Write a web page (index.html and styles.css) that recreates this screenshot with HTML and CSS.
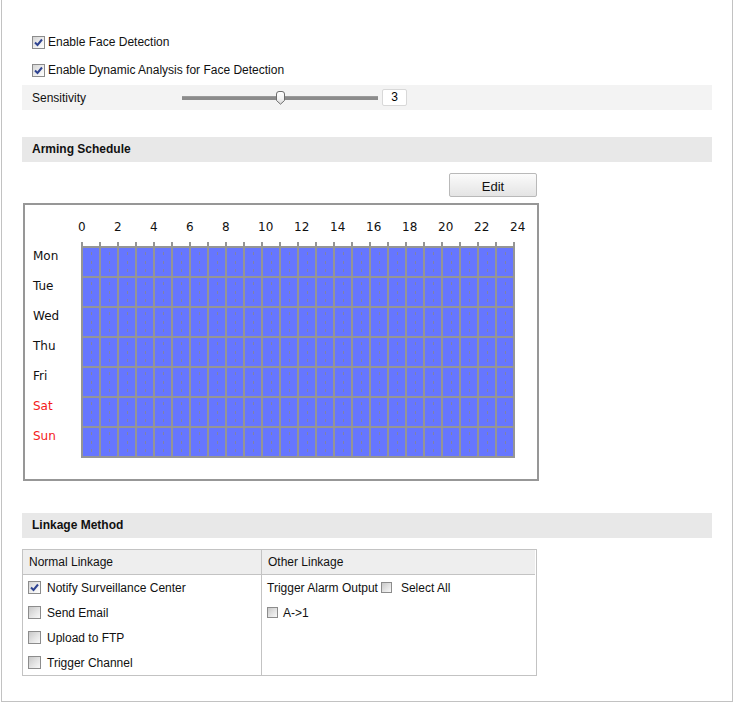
FILE: index.html
```html
<!DOCTYPE html>
<html>
<head>
<meta charset="utf-8">
<link rel="stylesheet" href="styles.css">
</head>
<body>
<div class="frame">
  <div class="content">
    <div class="opt-row">
      <span class="cb checked"><svg width="11" height="11" viewBox="0 0 11 11"><path d="M2 5.5 L4.5 8 L9 2.5" fill="none" stroke="#2e4391" stroke-width="2"/></svg></span>
      <span class="opt-text">Enable Face Detection</span>
    </div>
    <div class="opt-row">
      <span class="cb checked"><svg width="11" height="11" viewBox="0 0 11 11"><path d="M2 5.5 L4.5 8 L9 2.5" fill="none" stroke="#2e4391" stroke-width="2"/></svg></span>
      <span class="opt-text">Enable Dynamic Analysis for Face Detection</span>
    </div>
    <div class="sens-row">
      <span class="sens-label">Sensitivity</span>
      <div class="slider">
        <div class="track"></div>
        <svg class="thumb" width="11" height="14" viewBox="0 0 11 14">
          <defs>
            <linearGradient id="tg" x1="0" y1="0" x2="0" y2="1">
              <stop offset="0" stop-color="#ffffff"/>
              <stop offset="0.55" stop-color="#f4f4f4"/>
              <stop offset="1" stop-color="#d6d6d6"/>
            </linearGradient>
          </defs>
          <path d="M1.5 3 Q1.5 0.5 4 0.5 H7 Q9.5 0.5 9.5 3 V9.5 L5.5 13.2 L1.5 9.5 Z" fill="url(#tg)" stroke="#6e6e6e" stroke-width="1"/>
        </svg>
      </div>
      <div class="sens-value">3</div>
    </div>

    <div class="section-head">Arming Schedule</div>
    <div class="sched-wrap">
      <div class="btn-row"><div class="btn">Edit</div></div>
      <div class="sched">
        <div class="hours">
          <span>0</span><span>2</span><span>4</span><span>6</span><span>8</span><span>10</span><span>12</span><span>14</span><span>16</span><span>18</span><span>20</span><span>22</span><span class="last">24</span>
        </div>
        <div class="sched-body">
          <div class="days">
            <div>Mon</div><div>Tue</div><div>Wed</div><div>Thu</div><div>Fri</div><div class="weekend">Sat</div><div class="weekend">Sun</div>
          </div>
          <svg class="grid" width="434" height="216" viewBox="0 0 434 216">
            <defs>
              <pattern id="tick" x="0" y="0" width="18" height="4" patternUnits="userSpaceOnUse">
                <rect x="0" y="0" width="2" height="4" fill="#959595"/>
              </pattern>
              <pattern id="cell" x="0" y="4" width="18" height="30" patternUnits="userSpaceOnUse">
                <rect x="0" y="0" width="18" height="30" fill="#6676ff"/>
                <rect x="10" y="6" width="1" height="3" fill="#7f82a8"/>
                <rect x="10" y="15" width="1" height="3" fill="#7f82a8"/>
                <rect x="10" y="23" width="1" height="3" fill="#7f82a8"/>
                <rect x="0" y="0" width="2" height="30" fill="#959595"/>
                <rect x="0" y="0" width="18" height="2" fill="#959595"/>
              </pattern>
            </defs>
            <rect x="0" y="0" width="434" height="4" fill="url(#tick)"/>
            <rect x="0" y="4" width="434" height="212" fill="url(#cell)"/>
          </svg>
        </div>
      </div>
    </div>

    <div class="section-head link-head">Linkage Method</div>
    <div class="link">
      <div class="link-th">Normal Linkage</div>
      <div class="link-th right">Other Linkage</div>
      <div class="link-col">
        <div class="link-row">
          <span class="cb checked"><svg width="11" height="11" viewBox="0 0 11 11"><path d="M2 5.5 L4.5 8 L9 2.5" fill="none" stroke="#2e4391" stroke-width="2"/></svg></span>
          <span class="opt-text">Notify Surveillance Center</span>
        </div>
        <div class="link-row"><span class="cb"></span><span class="opt-text">Send Email</span></div>
        <div class="link-row"><span class="cb"></span><span class="opt-text">Upload to FTP</span></div>
        <div class="link-row"><span class="cb"></span><span class="opt-text">Trigger Channel</span></div>
      </div>
      <div class="link-col right">
        <div class="link-row other">
          <span>Trigger Alarm Output</span><span class="cb small sel"></span><span class="sel-text">Select All</span>
        </div>
        <div class="link-row other">
          <span class="cb small"></span><span class="a1">A-&gt;1</span>
        </div>
      </div>
    </div>
  </div>
</div>
</body>
</html>
```

FILE: styles.css
```css
html, body {
  margin: 0;
  padding: 0;
  background: #ffffff;
}
body {
  font-family: "Liberation Sans", Arial, sans-serif;
  font-size: 12px;
  color: #111;
}
.frame {
  box-sizing: border-box;
  margin-left: 1px;
  width: 732px;
  height: 702px;
  border: 1px solid #c2c2c2;
  border-top: none;
  padding: 28px 0 0 20px;
}
.content {
  width: 690px;
}
.opt-row {
  height: 28px;
  display: flex;
  align-items: center;
  padding-left: 10px;
}
.cb {
  box-sizing: border-box;
  width: 13px;
  height: 13px;
  border: 1px solid #8c8c8c;
  background: linear-gradient(135deg, #c8c8c8 0%, #e4e4e4 55%, #f8f8f8 100%);
  display: flex;
  align-items: center;
  justify-content: center;
  flex-shrink: 0;
}
.cb.checked {
  background: linear-gradient(135deg, #d4d4d4 0%, #eeeeee 55%, #ffffff 100%);
}
.cb.small {
  width: 11px;
  height: 11px;
}
.opt-text {
  margin-left: 3px;
}
.sens-row {
  margin-top: 1px;
  height: 25px;
  background: #f3f3f3;
  display: flex;
  align-items: center;
  padding-left: 10px;
}
.sens-label {
  width: 150px;
}
.slider {
  position: relative;
  width: 196px;
  height: 25px;
  display: flex;
  align-items: center;
}
.track {
  width: 196px;
  height: 4px;
  background: #8b8b8b;
  border-top: 1px solid #9a9a9a;
  box-sizing: border-box;
}
.thumb {
  position: absolute;
  left: 93px;
  top: 6px;
}
.sens-value {
  box-sizing: border-box;
  margin-left: 4px;
  width: 25px;
  height: 17px;
  border: 1px solid #d8d8d8;
  border-radius: 2px;
  background: #fff;
  text-align: center;
  line-height: 15px;
  font-size: 12px;
  color: #000;
}
.section-head {
  margin-top: 27px;
  height: 25px;
  line-height: 25px;
  background: #e8e8e8;
  padding-left: 10px;
  font-weight: bold;
  color: #111;
}
.sched-wrap {
  width: 516px;
  margin-left: 1px;
}
.btn-row {
  margin-top: 11px;
  display: flex;
  justify-content: flex-end;
  padding-right: 2px;
}
.btn {
  box-sizing: border-box;
  width: 88px;
  height: 24px;
  border: 1px solid #b9b9b9;
  border-radius: 2px;
  background: linear-gradient(#fbfbfb, #e4e4e4);
  text-align: center;
  line-height: 23px;
  padding-top: 1px;
  font-size: 13px;
  color: #111;
}
.sched {
  margin-top: 6px;
  box-sizing: border-box;
  width: 516px;
  height: 278px;
  border: 2px solid #979797;
  font-family: "DejaVu Sans", Verdana, sans-serif;
  font-size: 12px;
  color: #111;
}
.hours {
  box-sizing: border-box;
  height: 37px;
  padding: 15px 0 0 53px;
  line-height: 14px;
  display: flex;
}
.hours span {
  width: 36px;
  flex-shrink: 0;
}
.hours span.last {
  width: auto;
}
.sched-body {
  display: flex;
}
.days {
  box-sizing: border-box;
  width: 56px;
  padding-left: 8px;
  margin-top: -1px;
}
.days div {
  height: 30px;
  line-height: 30px;
}
.days .weekend {
  color: #f41a1a;
}
.grid {
  display: block;
}
.link-head {
  margin-top: 32px;
}
.link {
  margin-top: 11px;
  width: 515px;
  box-sizing: border-box;
  border: 1px solid #c3c3c3;
  display: grid;
  grid-template-columns: 238px 274px;
}
.link-th {
  height: 24px;
  line-height: 24px;
  background: #eeeeee;
  padding-left: 6px;
  border-bottom: 1px solid #c3c3c3;
}
.right {
  border-left: 1px solid #c3c3c3;
}
.link-col {
  height: 100px;
}
.link-row {
  height: 25px;
  display: flex;
  align-items: center;
  padding-left: 5px;
}
.link-row .opt-text {
  margin-left: 6px;
}
.cb.sel {
  margin-left: 3px;
}
.sel-text {
  margin-left: 9px;
}
.a1 {
  margin-left: 5px;
}
```
